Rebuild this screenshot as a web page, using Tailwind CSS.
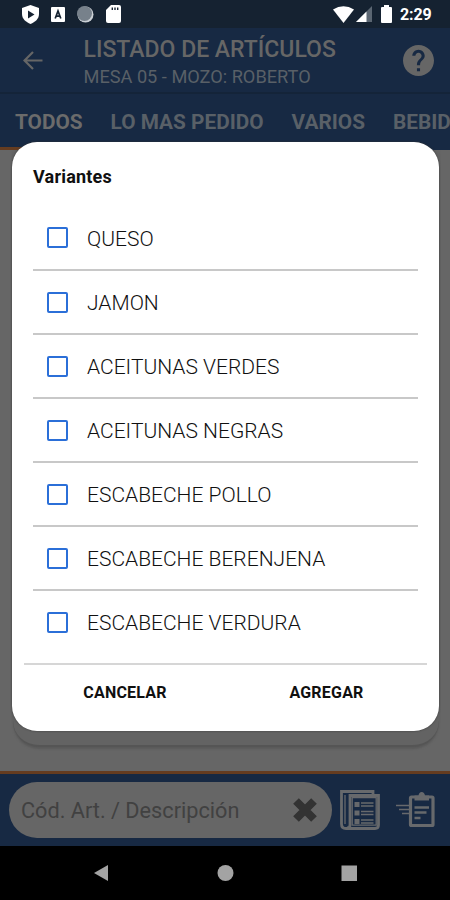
<!DOCTYPE html>
<html lang="es">
<head>
<meta charset="utf-8">
<title>Listado de artículos</title>
<script src="https://cdn.jsdelivr.net/npm/@tailwindcss/browser@4"></script>
</head>
<body class="bg-black font-['Roboto',sans-serif]">
<div class="relative flex h-[900px] w-[450px] flex-col overflow-hidden bg-[#666]">
  <header class="shrink-0 bg-[#172943] text-[#666]">
    <div class="flex h-7 items-center bg-[#152231] pl-[22px] pr-[18px]">
      <svg class="h-[19px] w-[17px]" viewBox="0 0 17 19"><path fill="#fff" d="M8.500 0 17 3v6c0 5-4 8-8.500 10C4 17 0 14 0 9V3z"/><path fill="#152231" d="M6 5.500 12.500 9.500 6 13.500z"/></svg>
      <svg class="ml-[12px] mt-px h-[15px] w-[14px]" viewBox="0 0 14 15"><rect width="14" height="15" rx="1" fill="#fff"/><path d="M4.200 11.500 7 4 9.800 11.500M5 9.200h4" fill="none" stroke="#152231" stroke-width="1.700"/></svg>
      <svg class="ml-[12px] h-[17px] w-[17px]" viewBox="0 0 17 17"><circle cx="8.500" cy="8.500" r="8" fill="#cbd0d5"/><circle cx="7.500" cy="7.500" r="7.500" fill="#77818b"/></svg>
      <svg class="ml-[12px] h-[18px] w-[15px]" viewBox="0 0 15 18"><path fill="#fff" d="M5 0h8q2 0 2 2v14q0 2-2 2H2q-2 0-2-2V5z"/><path d="M6.300 2.500v2.500M9 2.500v2.500M11.700 2.500v2.500" stroke="#152231" stroke-width="1.400"/></svg>
      <svg class="ml-auto h-[17px] w-[21px]" viewBox="0 0 21 17"><path fill="#fff" d="M0 3.500Q10.500-3 21 3.500L10.500 17z"/></svg>
      <svg class="ml-[2px] h-[16px] w-[16px]" viewBox="0 0 16 16"><path fill="#5b6672" d="M16 0v16H0z"/><path fill="#fff" d="M10.500 5.500V16H0z"/></svg>
      <svg class="ml-[9px] h-[18px] w-[11px]" viewBox="0 0 11 18"><path fill="#fff" d="M3 0h5v2h2q1 0 1 1v14q0 1-1 1H1q-1 0-1-1V3q0-1 1-1h2z"/></svg>
      <span class="ml-[8px] w-[32px] whitespace-nowrap pt-[2px] text-[16px] font-bold leading-[26px] tracking-[-0.1px] text-white">2:29</span>
    </div>
    <div class="flex h-[66px] border-b-2 border-[#142439]">
      <svg class="ml-[23px] mt-[23px] h-[19px] w-[20px]" viewBox="0 0 20 19" fill="none" stroke="#666" stroke-width="2.200"><path d="M19.500 9.500H2M10 1 1.500 9.500 10 18"/></svg>
      <div class="ml-[40.500px] whitespace-nowrap pt-[8px]">
        <h1 class="h-[27px] text-[23px] font-medium leading-[27px]">LISTADO DE ARTÍCULOS</h1>
        <p class="h-[26px] text-[18.2px] leading-[27px] text-[#596067]">MESA 05 - MOZO: ROBERTO</p>
      </div>
      <svg class="ml-auto mr-4 mt-[17px] h-[31px] w-[31px]" viewBox="2 2 20 20"><path fill="#666" d="M12 2C6.480 2 2 6.480 2 12s4.480 10 10 10 10-4.480 10-10S17.520 2 12 2zm1 17h-2v-2h2v2zm2.070-7.750-.900.920C13.450 12.900 13 13.500 13 15h-2v-.500c0-1.100.450-2.100 1.170-2.830l1.240-1.260c.370-.360.590-.860.590-1.410 0-1.100-.900-2-2-2s-2 .900-2 2H8c0-2.210 1.790-4 4-4s4 1.790 4 4c0 .880-.360 1.680-.930 2.250z"/></svg>
    </div>
    <nav class="flex h-[53px] gap-[28px] whitespace-nowrap pl-[15px] text-[20.8px] font-bold leading-[56px]">
      <span class="text-[#6b6b6b]">TODOS</span><span class="text-[#596067]">LO MAS PEDIDO</span><span class="text-[#596067]">VARIOS</span><span class="text-[#596067]">BEBID</span>
    </nav>
    <div class="h-[3px] w-[98px] bg-[#653c20]"></div>
  </header>
  <main class="flex-1 pl-[13px] pr-[11px]">
    <div class="h-[597px] rounded-b-[26px] border-b-2 border-[#555] bg-[#636363] shadow-[0_2px_2px_#5a5a5a]"></div>
  </main>
  <footer class="flex h-[75px] shrink-0 items-center border-t-[3px] border-[#653c20] bg-[#172943] pl-[9px]">
    <div class="flex h-[56px] w-[323px] items-center rounded-[28px] bg-[#666] pl-[12px] pr-[15px]">
      <span class="pt-[2px] text-[21.7px] text-[#414141]">Cód. Art. / Descripción</span>
      <svg class="ml-auto h-[24px] w-[24px]" viewBox="0 0 24 24" stroke="#333" stroke-width="8"><path d="M3 3 21 21M21 3 3 21"/></svg>
    </div>
    <svg class="ml-[7px] h-[42px] w-[42px]" viewBox="0 0 42 42" fill="none" stroke="#67696c">
      <path stroke-width="2.800" d="M34 6V2.500H2.500V35q0 4.500 4.500 4.500h29q3.500 0 3.500-3.500V6.500H11V36q0 3-3 3"/>
      <path stroke-width="1.300" d="M6 6v29M37.200 8.500v27.700H13.200V8.500z"/>
      <path fill="#67696c" stroke="none" d="M15.500 13h5v5h-5zM15.500 21.500h5v5h-5zM15.500 30h5v5h-5z"/>
      <path stroke-width="1.500" d="M22 14h12.500M22 17h12.500M22 22.500h12.500M22 25.500h12.500M22 31h12.500M22 34h12.500"/>
    </svg>
    <svg class="ml-[15px] h-[36px] w-[39px]" viewBox="0 0 39 36" fill="none" stroke="#67696c">
      <rect x="14.500" y="5" width="22.500" height="28.500" rx="1" stroke-width="3.200"/>
      <path fill="#67696c" stroke="none" d="M18.500 8.500V3.500h4Q23 0 25.700 0T29 3.500h4v5z"/>
      <path stroke-width="2.300" d="M18.500 15.500h14.500M18.500 20.500h12M18.500 26h6"/>
      <path stroke-width="1.500" d="M0 13.500h13M3 17.500h10M6 21.500h7"/>
    </svg>
  </footer>
  <div class="flex h-[54px] shrink-0 items-center bg-black">
    <svg class="h-[54px] w-[450px]" viewBox="0 0 450 54" fill="#a3a3a3"><path d="M94 27 108 19v16z"/><circle cx="225.500" cy="27" r="8"/><rect x="341.500" y="19.500" width="15.500" height="15.500"/></svg>
  </div>

  <section role="dialog" class="absolute left-3 top-[142px] flex h-[589px] w-[427px] flex-col rounded-[25px] bg-white text-[#101010] shadow-[0_0_2px_#333]">
    <h2 class="h-[64px] pl-[21px] pt-[22px] text-[18px] font-bold leading-[25px] tracking-[0.2px]">Variantes</h2>
    <ul class="mx-[21px] text-[21px] font-light">
      <li class="flex h-[65px] items-center border-b-2 border-[#c8c8c8] pl-[14px]"><span class="h-[21px] w-[21px] rounded-[2px] border-2 border-[#2b6fd8]"></span><span class="ml-[19px] pt-[4px]">QUESO</span></li>
      <li class="flex h-[64px] items-center border-b-2 border-[#c8c8c8] pl-[14px]"><span class="h-[21px] w-[21px] rounded-[2px] border-2 border-[#2b6fd8]"></span><span class="ml-[19px] pt-[4px]">JAMON</span></li>
      <li class="flex h-[64px] items-center border-b-2 border-[#c8c8c8] pl-[14px]"><span class="h-[21px] w-[21px] rounded-[2px] border-2 border-[#2b6fd8]"></span><span class="ml-[19px] pt-[4px]">ACEITUNAS VERDES</span></li>
      <li class="flex h-[64px] items-center border-b-2 border-[#c8c8c8] pl-[14px]"><span class="h-[21px] w-[21px] rounded-[2px] border-2 border-[#2b6fd8]"></span><span class="ml-[19px] pt-[4px]">ACEITUNAS NEGRAS</span></li>
      <li class="flex h-[64px] items-center border-b-2 border-[#c8c8c8] pl-[14px]"><span class="h-[21px] w-[21px] rounded-[2px] border-2 border-[#2b6fd8]"></span><span class="ml-[19px] pt-[4px]">ESCABECHE POLLO</span></li>
      <li class="flex h-[64px] items-center border-b-2 border-[#c8c8c8] pl-[14px]"><span class="h-[21px] w-[21px] rounded-[2px] border-2 border-[#2b6fd8]"></span><span class="ml-[19px] pt-[4px]">ESCABECHE BERENJENA</span></li>
      <li class="flex h-[62px] items-center pl-[14px]"><span class="h-[21px] w-[21px] rounded-[2px] border-2 border-[#2b6fd8]"></span><span class="ml-[19px] pt-[4px]">ESCABECHE VERDURA</span></li>
    </ul>
    <div class="mx-3 mt-[10px] flex border-t-2 border-[#d6d6d6] text-[16px] font-bold leading-[56px] tracking-[0.2px]">
      <button class="w-[202px] text-center">CANCELAR</button>
      <button class="w-[201px] text-center">AGREGAR</button>
    </div>
  </section>
</div>
</body>
</html>
